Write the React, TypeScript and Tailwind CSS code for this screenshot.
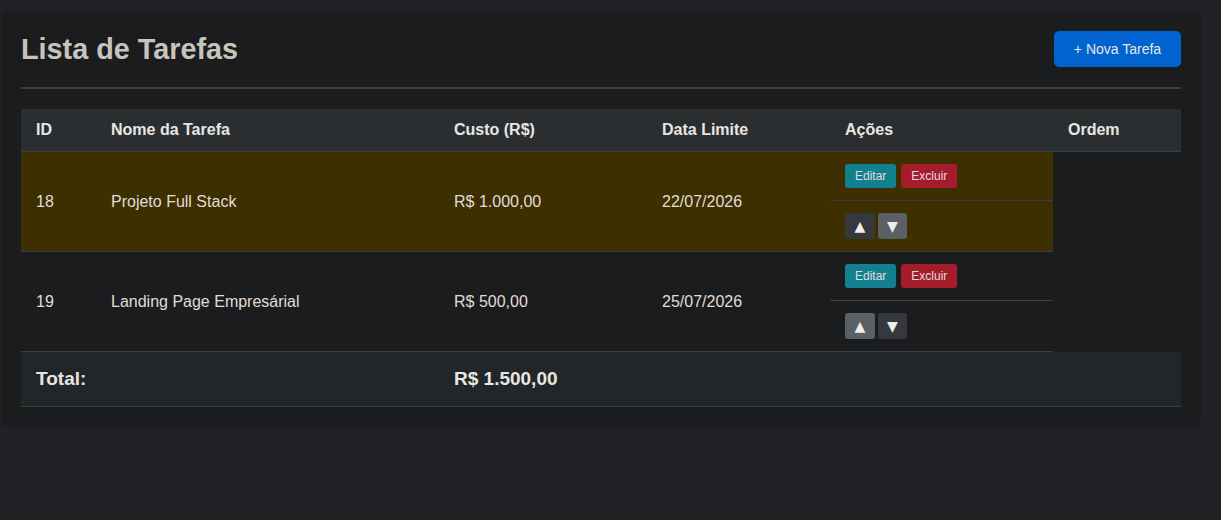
import React from 'react';

type Task = {
  id: number;
  name: string;
  cost: string;
  due: string;
  highlight: boolean;
  upDark: boolean;
};

const tasks: Task[] = [
  { id: 18, name: 'Projeto Full Stack', cost: 'R$ 1.000,00', due: '22/07/2026', highlight: true, upDark: true },
  { id: 19, name: 'Landing Page Empresárial', cost: 'R$ 500,00', due: '25/07/2026', highlight: false, upDark: false },
];

const font = { fontFamily: '"Liberation Sans", Arial, sans-serif' };

const cell = 'px-[15px] py-3 border-b border-[#3c3f42] text-left align-middle';

const TaskRows = ({ task }: { task: Task }) => {
  const bg = task.highlight ? 'bg-[#3d2f00]' : '';
  const dark = 'bg-[#35393d]';
  const gray = 'bg-[#5b6064]';
  return (
    <>
      <tr>
        <td rowSpan={2} className={`${cell} ${bg}`}>{task.id}</td>
        <td rowSpan={2} className={`${cell} ${bg}`}>{task.name}</td>
        <td rowSpan={2} className={`${cell} ${bg}`}>{task.cost}</td>
        <td rowSpan={2} className={`${cell} ${bg}`}>{task.due}</td>
        <td className={`${cell} ${bg}`}>
          <div className="flex gap-[5px]">
            <button className="h-6 px-[10px] rounded-[3px] bg-[#12808f] text-xs text-[#e0ddd8]">Editar</button>
            <button className="h-6 px-[10px] rounded-[3px] bg-[#a51d2d] text-xs text-[#e0ddd8]">Excluir</button>
          </div>
        </td>
      </tr>
      <tr>
        <td className={`${cell} ${bg}`}>
          <div className="flex gap-[3px]">
            <button
              className={`w-[30px] h-[26px] rounded-[3px] flex items-center justify-center text-[14px] leading-none text-[#f0eeea] ${task.upDark ? dark : gray}`}
              style={{ fontFamily: '"DejaVu Sans", sans-serif' }}
            >
              ▲
            </button>
            <button
              className={`w-[29px] h-[26px] rounded-[3px] flex items-center justify-center text-[14px] leading-none text-[#f0eeea] ${task.upDark ? gray : dark}`}
              style={{ fontFamily: '"DejaVu Sans", sans-serif' }}
            >
              ▼
            </button>
          </div>
        </td>
      </tr>
    </>
  );
};

export default function App() {
  return (
    <div className="min-h-screen bg-[#202124] pt-[11px] pl-px" style={font}>
      <div className="w-[1200px] rounded-lg bg-[#1b1c1e] p-5">
        <div className="flex items-center justify-between pb-5 border-b-2 border-[#3b3d40]">
          <h1 className="text-[28.8px] leading-9 font-bold text-[#c8c4bc]">Lista de Tarefas</h1>
          <button className="h-9 w-[127px] rounded-[5px] bg-[#0063cf] text-sm text-[#e8e6e3]">+ Nova Tarefa</button>
        </div>

        <table className="mt-5 w-full table-fixed border-separate border-spacing-0 text-base text-[#e0ddd8]">
          <colgroup>
            <col className="w-[75px]" />
            <col className="w-[343px]" />
            <col className="w-[208px]" />
            <col className="w-[183px]" />
            <col className="w-[223px]" />
            <col className="w-[128px]" />
          </colgroup>
          <thead>
            <tr className="text-[#e8e6e3]">
              {['ID', 'Nome da Tarefa', 'Custo (R$)', 'Data Limite', 'Ações', 'Ordem'].map((h) => (
                <th key={h} className={`${cell} bg-[#2b2e31] font-bold leading-[18px]`}>
                  {h}
                </th>
              ))}
            </tr>
          </thead>
          <tbody className="leading-[18px]">
            {tasks.map((t) => (
              <TaskRows key={t.id} task={t} />
            ))}
          </tbody>
          <tfoot>
            <tr className="bg-[#232628] text-[19px] font-bold text-[#e8e6e3]">
              <td colSpan={2} className="px-[15px] py-[15px] leading-6 border-b border-[#3c3f42] bg-[#232628]">
                Total:
              </td>
              <td colSpan={4} className="px-[15px] py-[15px] leading-6 border-b border-[#3c3f42] bg-[#232628]">
                R$ 1.500,00
              </td>
            </tr>
          </tfoot>
        </table>
      </div>
    </div>
  );
}
